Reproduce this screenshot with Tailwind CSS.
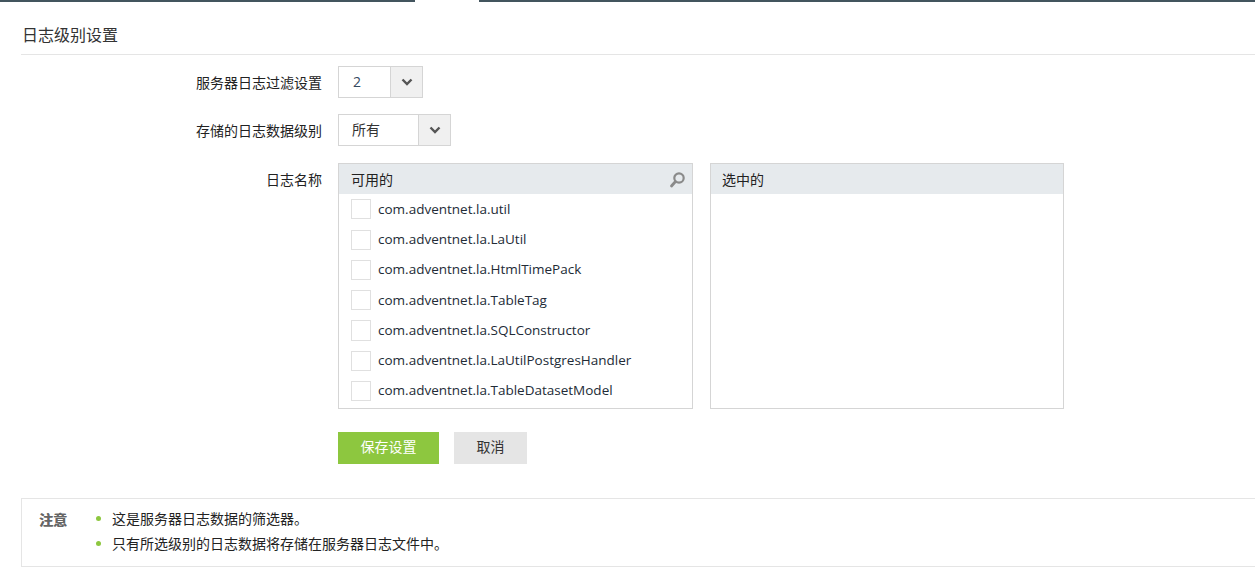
<html lang="zh">
<head>
  <meta charset="utf-8"/>
  <title>日志级别设置</title>
  <script src="https://cdn.jsdelivr.net/npm/@tailwindcss/browser@4"></script>
</head>
<body class="bg-white h-[570px] overflow-hidden text-[14px] text-[#333] font-['Open_Sans','Noto_Sans_CJK_SC',sans-serif]">
  <!-- top bar -->
  <div class="h-[2px] bg-[#43555e] pl-[415px]">
    <div class="w-[64px] h-[2px] bg-white"></div>
  </div>

  <div class="pl-[21px]">
    <h1 class="h-[53px] border-b border-[#e5e5e5] pt-[22px] pl-[1px] text-[16px] leading-[22px] font-normal text-[#333]">日志级别设置</h1>

    <!-- filter setting -->
    <div class="flex mt-[11px] h-[32px] items-center">
      <label class="w-[301px] pt-[2px] text-right leading-[32px] text-[#222]">服务器日志过滤设置</label>
      <div class="ml-[16px] w-[85px] h-[32px] flex border border-[#d5d5d5]">
        <span class="w-[51px] pl-[14px] leading-[30px] text-[14px] text-[#34495e]">2</span>
        <span class="flex-1 flex items-center justify-center bg-[#f0f0f0] border-l border-[#d5d5d5]">
          <svg width="12" height="8" viewBox="0 0 12 8"><path d="M1.5 1.5 6 6l4.500-4.500" fill="none" stroke="#555" stroke-width="2.400"/></svg>
        </span>
      </div>
    </div>

    <!-- stored level -->
    <div class="flex mt-[16px] h-[32px] items-center">
      <label class="w-[301px] pt-[2px] text-right leading-[32px] text-[#222]">存储的日志数据级别</label>
      <div class="ml-[16px] w-[113px] h-[32px] flex border border-[#d5d5d5]">
        <span class="w-[79px] pl-[13px] leading-[29px] text-[#333]">所有</span>
        <span class="flex-1 flex items-center justify-center bg-[#f0f0f0] border-l border-[#d5d5d5]">
          <svg width="12" height="8" viewBox="0 0 12 8"><path d="M1.5 1.5 6 6l4.500-4.500" fill="none" stroke="#555" stroke-width="2.400"/></svg>
        </span>
      </div>
    </div>

    <!-- log names -->
    <div class="flex mt-[17px]">
      <label class="w-[301px] text-right leading-[34px] text-[#222]">日志名称</label>
      <div class="ml-[16px] w-[355px] h-[246px] border border-[#d5d5d5]">
        <div class="h-[30px] bg-[#e6eaed] pl-[12px] pr-[6px] flex items-center justify-between text-[#222]">
          <span>可用的</span>
          <svg width="17" height="17" viewBox="0 0 17 17"><circle cx="10" cy="7" r="4.700" fill="none" stroke="#8a8a8a" stroke-width="2.200"/><path d="M6.500 10.500 2.500 15" stroke="#8a8a8a" stroke-width="2.800" stroke-linecap="round"/></svg>
        </div>
        <ul class="pl-[12px] pt-[5px] text-[13.500px] text-[#222b36]">
          <li class="flex items-center h-[20px] mb-[11px]"><span class="w-[20px] h-[20px] border border-[#e0e0e0] mr-[7px]"></span><span>com.adventnet.la.util</span></li>
          <li class="flex items-center h-[20px] mb-[10px]"><span class="w-[20px] h-[20px] border border-[#e0e0e0] mr-[7px]"></span><span class="pb-[2px]">com.adventnet.la.LaUtil</span></li>
          <li class="flex items-center h-[20px] mb-[10px]"><span class="w-[20px] h-[20px] border border-[#e0e0e0] mr-[7px]"></span><span class="pb-[2px]">com.adventnet.la.HtmlTimePack</span></li>
          <li class="flex items-center h-[20px] mb-[10px]"><span class="w-[20px] h-[20px] border border-[#e0e0e0] mr-[7px]"></span><span>com.adventnet.la.TableTag</span></li>
          <li class="flex items-center h-[20px] mb-[11px]"><span class="w-[20px] h-[21px] border border-[#e0e0e0] mr-[7px]"></span><span>com.adventnet.la.SQLConstructor</span></li>
          <li class="flex items-center h-[20px] mb-[10px]"><span class="w-[20px] h-[20px] border border-[#e0e0e0] mr-[7px]"></span><span class="pb-[2px]">com.adventnet.la.LaUtilPostgresHandler</span></li>
          <li class="flex items-center h-[20px]"><span class="w-[20px] h-[20px] border border-[#e0e0e0] mr-[7px]"></span><span class="pb-[2px]">com.adventnet.la.TableDatasetModel</span></li>
        </ul>
      </div>
      <div class="ml-[17px] w-[354px] h-[246px] border border-[#d5d5d5]">
        <div class="h-[30px] bg-[#e6eaed] pl-[11px] flex items-center text-[#222]">选中的</div>
      </div>
    </div>

    <!-- buttons -->
    <div class="flex gap-[15px] mt-[23px] ml-[317px]">
      <button class="w-[101px] h-[32px] pb-[3px] bg-[#8dc73f] text-white">保存设置</button>
      <button class="w-[73px] h-[32px] pb-[3px] bg-[#e5e5e5] text-[#333]">取消</button>
    </div>

    <!-- note -->
    <div class="flex mt-[34px] h-[69px] border border-r-0 border-[#e5e5e5] pl-[17px] pt-[7px]">
      <span class="w-[56px] leading-[26px] font-['Noto_Sans_CJK_SC',sans-serif] font-bold text-[#666] [text-shadow:0.4px_0_0_#666]">注意</span>
      <ul class="text-[#222]">
        <li class="flex items-center h-[25px]"><span class="w-[5px] h-[5px] rounded-full bg-[#8dc73f] mr-[11px] ml-[1px]"></span>这是服务器日志数据的筛选器。</li>
        <li class="flex items-center h-[25px]"><span class="w-[5px] h-[5px] rounded-full bg-[#8dc73f] mr-[11px] ml-[1px]"></span>只有所选级别的日志数据将存储在服务器日志文件中。</li>
      </ul>
    </div>
  </div>
</body>
</html>
